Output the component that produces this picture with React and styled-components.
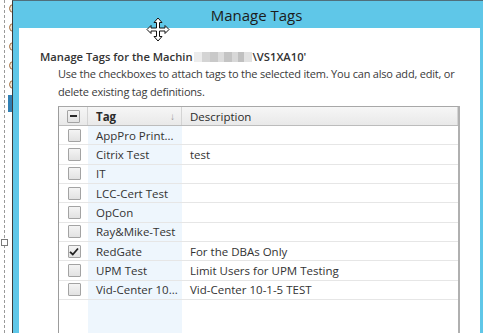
import React from 'react';
import styled, { createGlobalStyle } from 'styled-components';

const GlobalStyle = createGlobalStyle`
  html, body {
    margin: 0;
    padding: 0;
    width: 483px;
    height: 333px;
    overflow: hidden;
    background: #fff;
    font-family: "Open Sans", "Noto Sans", "Liberation Sans", sans-serif;
  }
`;

const Page = styled.div`
  position: relative;
  display: flex;
  width: 483px;
  height: 333px;
  overflow: hidden;
`;

const Gutter = styled.div`
  position: relative;
  width: 12px;
  flex: none;
  background: #fff;
  overflow: hidden;
  &::before {
    content: "";
    position: absolute;
    left: 4px;
    top: 0;
    bottom: 0;
    border-left: 1px dashed #9a9a9a;
  }
`;

const Knob = styled.span`
  position: absolute;
  left: 9px;
  top: ${p => p.top}px;
  width: 7px;
  height: 7px;
  border-radius: 50%;
  border: 1px solid #a06a3a;
  background: #f3e3cf;
`;

const BlueTab = styled.span`
  position: absolute;
  left: 8px;
  top: 95px;
  width: 6px;
  height: 17px;
  background: #2f7fb3;
`;

const Handle = styled.span`
  position: absolute;
  left: 1px;
  top: 239px;
  width: 5px;
  height: 5px;
  border: 1px solid #7a7a7a;
  background: #fff;
`;

const Window = styled.div`
  flex: 1;
  display: flex;
  flex-direction: column;
  background: #5fc7e8;
  border-left: 1px solid #3c3c3c;
  border-top: 1px solid #4f6f7c;
  padding: 0 3px 0 6px;
`;

const TitleBar = styled.div`
  height: 27px;
  flex: none;
  display: flex;
  align-items: center;
  justify-content: center;
  font-family: "Open Sans", "Noto Sans", sans-serif;
  font-size: 15px;
  color: #1c1c1c;
  padding-left: 14px;
`;

const Content = styled.div`
  flex: 1;
  display: flex;
  flex-direction: column;
  background: #fff;
  padding: 21px 0 0 21px;
  min-height: 0;
`;

const Heading = styled.div`
  font-size: 11.2px;
  font-weight: 600;
  color: #333;
  line-height: 16px;
  display: flex;
  align-items: center;
  white-space: nowrap;
`;

const Blur = styled.span`
  display: inline-block;
  width: 58px;
  height: 10px;
  margin: 0 1px 0 1px;
  background: linear-gradient(to right,
    #ececec 0 8px, #d4d4d4 8px 16px, #c9c9c9 16px 24px, #dcdcdc 24px 30px,
    #c4c4c4 30px 38px, #d8d8d8 38px 44px, #c0c0c0 44px 50px, #e2e2e2 50px 58px);
`;

const Body = styled.div`
  flex: 1;
  display: flex;
  flex-direction: column;
  padding: 0 20px 0 18px;
  min-height: 0;
`;

const Intro = styled.p`
  margin: 0 0 5px 0;
  font-size: 11px;
  letter-spacing: -0.2px;
  line-height: 18px;
  color: #3a3a3a;
`;

const Grid = styled.div`
  flex: 1;
  border-left: 1px solid #9c9c9c;
  border-right: 2px solid #b0b0b0;
  border-top: 1px solid #a8a8a8;
  background: linear-gradient(to right,
    #fff 0 29px, #eef6fd 29px 123px, #fff 123px);
  font-size: 11.5px;
  color: #333;
`;

const HeaderRow = styled.div`
  display: grid;
  grid-template-columns: 29px 94px 1fr;
  height: 18px;
  background: linear-gradient(#f6f6f6, #e9e9e9);
  border-bottom: 1px solid #bcbcbc;
`;

const HeaderCell = styled.div`
  display: flex;
  align-items: center;
  justify-content: ${p => (p.center ? 'center' : 'space-between')};
  padding: ${p => (p.center ? '0' : '0 6px 0 8px')};
  border-right: 1px solid #d4d4d4;
  font-weight: ${p => (p.bold ? 700 : 400)};
  color: #2a2a2a;
`;

const SortArrow = styled.span`
  color: #9a9a9a;
  font-size: 10px;
  font-weight: 400;
`;

const Row = styled.div`
  display: grid;
  grid-template-columns: 29px 94px 1fr;
  height: 19.33px;
  box-sizing: border-box;
  border-bottom: 1px solid #e6e6e6;
`;

const Cell = styled.div`
  display: flex;
  align-items: center;
  justify-content: ${p => (p.center ? 'center' : 'flex-start')};
  padding-left: ${p => (p.center ? '0' : '8px')};
  white-space: nowrap;
  overflow: hidden;
`;

const Box = styled.span`
  width: 11px;
  height: 11px;
  border: 1px solid #a3a3a3;
  border-radius: 1px;
  background: linear-gradient(#f4f4f4, #e2e2e2);
  display: flex;
  align-items: center;
  justify-content: center;
  margin-left: 1px;
`;

const Dash = styled.span`
  width: 7px;
  height: 2px;
  background: #2a2a2a;
`;

const Check = () => (
  <svg width="10" height="9" viewBox="0 0 10 9">
    <path d="M1 4.8 L3.8 7.5 L9 1.5" fill="none" stroke="#222" strokeWidth="1.8" />
  </svg>
);

const MoveCursor = styled.svg`
  position: absolute;
  left: 146px;
  top: 17px;
`;

const tags = [
  { name: 'AppPro Print...', desc: '' },
  { name: 'Citrix Test', desc: 'test' },
  { name: 'IT', desc: '' },
  { name: 'LCC-Cert Test', desc: '' },
  { name: 'OpCon', desc: '' },
  { name: 'Ray&Mike-Test', desc: '' },
  { name: 'RedGate', desc: 'For the DBAs Only', checked: true },
  { name: 'UPM Test', desc: 'Limit Users for UPM Testing' },
  { name: 'Vid-Center 10...', desc: 'Vid-Center 10-1-5 TEST' },
];

export default function App() {
  return (
    <>
      <GlobalStyle />
      <Page>
        <Gutter>
          {[4, 23, 42, 61, 80].map(t => <Knob key={t} top={t} />)}
          <BlueTab />
          <Handle />
        </Gutter>
        <Window>
          <TitleBar>Manage Tags</TitleBar>
          <Content>
            <Heading>
              Manage Tags for the Machin<Blur />\VS1XA10'
            </Heading>
            <Body>
              <Intro>
                Use the checkboxes to attach tags to the selected item. You can also add, edit, or
                delete existing tag definitions.
              </Intro>
              <Grid>
                <HeaderRow>
                  <HeaderCell center>
                    <Box><Dash /></Box>
                  </HeaderCell>
                  <HeaderCell bold>
                    Tag<SortArrow>↓</SortArrow>
                  </HeaderCell>
                  <HeaderCell>Description</HeaderCell>
                </HeaderRow>
                {tags.map(t => (
                  <Row key={t.name}>
                    <Cell center>
                      <Box>{t.checked && <Check />}</Box>
                    </Cell>
                    <Cell>{t.name}</Cell>
                    <Cell>{t.desc}</Cell>
                  </Row>
                ))}
              </Grid>
            </Body>
          </Content>
        </Window>
        <MoveCursor width="24" height="25" viewBox="0 0 24 25">
          <path
            d="M12 1 L16 5.5 L13.5 5.5 L13.5 11 L19 11 L19 8.5 L23 12.5 L19 16.5 L19 14 L13.5 14 L13.5 19.5 L16 19.5 L12 24 L8 19.5 L10.5 19.5 L10.5 14 L5 14 L5 16.5 L1 12.5 L5 8.5 L5 11 L10.5 11 L10.5 5.5 L8 5.5 Z"
            fill="#fff"
            stroke="#111"
            strokeWidth="1"
            strokeLinejoin="miter"
          />
        </MoveCursor>
      </Page>
    </>
  );
}
